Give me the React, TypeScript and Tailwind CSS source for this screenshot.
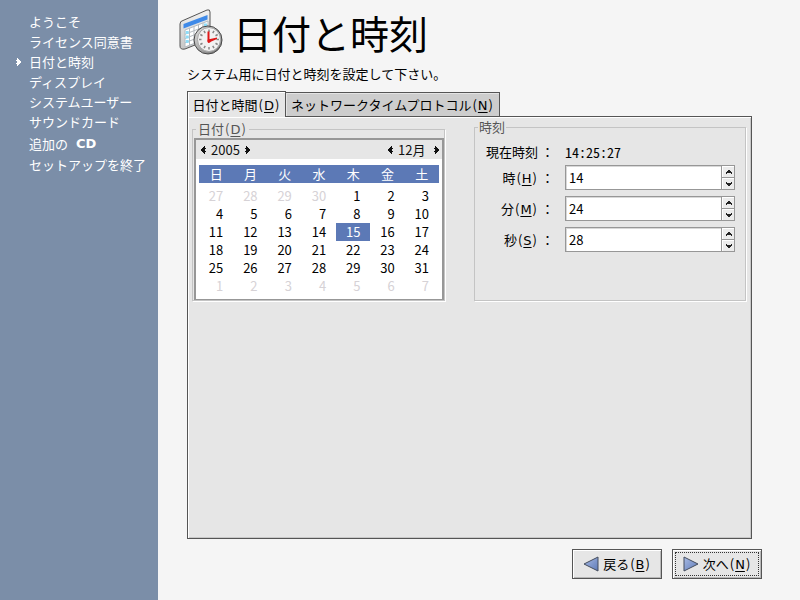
import React, { useState } from "react";

const steps = [
  { label: "ようこそ" },
  { label: "ライセンス同意書" },
  { label: "日付と時刻", current: true },
  { label: "ディスプレイ" },
  { label: "システムユーザー" },
  { label: "サウンドカード" },
  { label: "追加の", latin: "CD" },
  { label: "セットアップを終了" },
];

const weekdays = ["日", "月", "火", "水", "木", "金", "土"];

const weeks = [
  [27, 28, 29, 30, 1, 2, 3],
  [4, 5, 6, 7, 8, 9, 10],
  [11, 12, 13, 14, 15, 16, 17],
  [18, 19, 20, 21, 22, 23, 24],
  [25, 26, 27, 28, 29, 30, 31],
  [1, 2, 3, 4, 5, 6, 7],
];

function Mnemonic({ k }: { k: string }) {
  return (
    <span className="px-px">
      (<span className="mx-px font-['DejaVu_Sans',sans-serif] leading-none underline underline-offset-2">{k}</span>)
    </span>
  );
}

function Arrow({ dir }: { dir: "left" | "right" }) {
  return (
    <svg width="5" height="8" viewBox="0 0 5 8" fill="currentColor" aria-hidden="true">
      {dir === "left" ? (
        <path d="M3 0h1v2h1v1H4v2h1v1H4v2H3V7H2V6H1V5H0V3h1V2h1V1h1z" />
      ) : (
        <path d="M1 0h1v1h1v1h1v1h1v2H4v1H3v1H2v1H1V6H0V5h1V3H0V2h1z" />
      )}
    </svg>
  );
}

function SpinArrow({ up }: { up?: boolean }) {
  return (
    <svg width="6" height="4" viewBox="0 0 6 4" fill="#222" aria-hidden="true">
      {up ? <path d="M2 0h2v1h1v1h1v2H5V3H1v1H0V2h1V1h1z" /> : <path d="M0 0h1v1h4V0h1v2H5v1H4v1H2V3H1V2H0z" />}
    </svg>
  );
}

function ClockCalendarIcon() {
  const ticks = Array.from({ length: 12 }, (_, i) => i * 30);
  return (
    <svg width="44" height="48" viewBox="0 0 44 48" aria-hidden="true">
      <defs>
        <linearGradient id="paper" x1="0" y1="0" x2="0" y2="1">
          <stop offset="0" stopColor="#f2f2f2" />
          <stop offset="1" stopColor="#c6c6c6" />
        </linearGradient>
        <linearGradient id="rim" x1="0" y1="0" x2="1" y2="1">
          <stop offset="0" stopColor="#e6e6e6" />
          <stop offset="1" stopColor="#6d6d6d" />
        </linearGradient>
      </defs>
      <path d="M4 12.500 28 2q3-1 3 2v27L6 41q-5 1-5-3V16q0-3 3-3.500z" fill="url(#paper)" stroke="#555" />
      <path d="M4.500 16 28.500 7v4.500L4.500 20.500z" fill="#3f8ae8" />
      <path d="M6 22 29 13v17L6 39z" fill="#fff" />
      <path
        d="M6 22 29 13M6 26.250l23-9M6 30.500l23-9M6 34.750l23-9M6 39l23-9M6 22v17M10.500 20v17M15 18.500v17M19.500 16.500v17M24 15v17M29 13v17"
        stroke="#b4bac0"
        fill="none"
      />
      <path d="M8.200 23v3M8.200 27.500v3M8.200 32v3M26.500 15.500v3M26.500 19.500v2" stroke="#8edcf8" strokeWidth="3" />
      <circle cx="29" cy="32" r="14" fill="url(#rim)" stroke="#484848" />
      <ellipse cx="30" cy="31.500" rx="11.500" ry="12" fill="#f2f2f2" stroke="#a5a5a5" />
      {ticks.map((a) => (
        <path key={a} d="M30 21.500v2.500" stroke="#888" strokeWidth="1.500" transform={`rotate(${a} 30 31.500)`} />
      ))}
      <path d="M29.500 23.500v9" stroke="#e01818" strokeWidth="2" />
      <path d="M29 35 38 31v-1.500l-9 2z" fill="#e01818" />
      <circle cx="30" cy="33" r="1.800" fill="#e01818" />
    </svg>
  );
}

function Triangle({ dir }: { dir: "left" | "right" }) {
  return (
    <svg width="16" height="16" viewBox="0 0 16 16" aria-hidden="true">
      <defs>
        <linearGradient id={"tri-" + dir} x1="0" y1="0" x2="1" y2="1">
          <stop offset="0" stopColor="#a9bbe4" />
          <stop offset="1" stopColor="#5f7bb8" />
        </linearGradient>
      </defs>
      <path
        d={dir === "left" ? "M15 1v14L1 8z" : "M1 1v14l14-7z"}
        fill={"url(#tri-" + dir + ")"}
        stroke="#454d5c"
        strokeLinejoin="round"
      />
    </svg>
  );
}

function Spin({ id, start, max }: { id: string; start: number; max: number }) {
  const [value, setValue] = useState(String(start));
  const step = (d: number) => setValue(String((Number(value) + d + max) % max));
  const btn = "flex flex-1 items-center justify-center bg-[#ececec] border-t border-l border-white";
  return (
    <div className="flex h-[25px] border border-[#979797] bg-white">
      <input
        id={id}
        inputMode="numeric"
        value={value}
        onChange={(e) => setValue(e.target.value)}
        className="w-0 flex-1 border-t border-l border-[#d8d8d8] bg-white px-[2px] outline-none"
      />
      <div className="flex w-[13px] flex-col border-l border-[#979797]">
        <button type="button" aria-label="増やす" onClick={() => step(1)} className={btn}>
          <SpinArrow up />
        </button>
        <div className="h-px bg-[#979797]" />
        <button type="button" aria-label="減らす" onClick={() => step(-1)} className={btn}>
          <SpinArrow />
        </button>
      </div>
    </div>
  );
}

function Calendar() {
  const [selected, setSelected] = useState(15);
  return (
    <div className="border-2 border-b border-[#979797] bg-white">
      <div className="flex h-[19px] items-center justify-between bg-[#e6e6e6] pr-[3px] pl-[5px] text-[#111]">
        <div className="flex items-center gap-[5px]">
          <button type="button" aria-label="前の年"><Arrow dir="left" /></button>
          <span className="w-[29px] whitespace-nowrap">2005</span>
          <button type="button" aria-label="次の年"><Arrow dir="right" /></button>
        </div>
        <div className="flex items-center gap-[5px]">
          <button type="button" aria-label="前の月"><Arrow dir="left" /></button>
          <span className="w-[31px] whitespace-nowrap">12月</span>
          <button type="button" aria-label="次の月"><Arrow dir="right" /></button>
        </div>
      </div>
      <div className="px-[3px] pt-[6px] pb-1">
        <table className="w-full table-fixed border-collapse">
          <thead>
            <tr className="h-[18px] bg-[#5c79b6] text-white">
              {weekdays.map((d) => (
                <th key={d} scope="col" className="p-0 font-normal leading-[18px]">{d}</th>
              ))}
            </tr>
          </thead>
          <tbody className="before:block before:h-1">
            {weeks.map((week, w) => (
              <tr key={w}>
                {week.map((d) => {
                  const outside = (w === 0 && d > 20) || w === 5;
                  const on = !outside && d === selected;
                  return (
                    <td key={d} className="h-[18px] p-0">
                      <button
                        type="button"
                        onClick={() => !outside && setSelected(d)}
                        className={
                          "block h-[18px] w-full pr-[10px] text-right leading-[18px] " +
                          (on ? "bg-[#5c79b6] text-white" : outside ? "text-[#d6d2d6]" : "text-black")
                        }
                      >
                        {d}
                      </button>
                    </td>
                  );
                })}
              </tr>
            ))}
          </tbody>
        </table>
      </div>
    </div>
  );
}

const group = "min-w-0 border border-[#c4c4c4] shadow-[1px_1px_0_#fff]";

export default function App() {
  return (
    <div className="flex min-h-screen bg-[#f5f5f5] font-['Noto_Sans_CJK_JP',sans-serif] text-[13px] leading-[18px] text-black">
      <nav aria-label="セットアップ" className="w-[158px] shrink-0 bg-[#7b8ea8] pt-3 text-white">
        <ol className="flex flex-col">
          {steps.map((s) => (
            <li
              key={s.label}
              aria-current={s.current ? "step" : undefined}
              className={"flex items-center whitespace-nowrap " + (s.latin ? "h-[23px]" : "h-5")}
            >
              <span className="flex w-[29px] pl-4">{s.current && <Arrow dir="right" />}</span>
              <span>{s.label}</span>
              {s.latin && <b className="ml-2 font-['DejaVu_Sans',sans-serif]">{s.latin}</b>}
            </li>
          ))}
        </ol>
      </nav>

      <main className="flex min-w-0 flex-1 flex-col pr-[38px] pb-[21px] pl-[29px]">
        <header>
          <div className="-ml-2 flex h-16 items-center gap-[10px]">
            <ClockCalendarIcon />
            <h1 className="text-[39px] leading-[60px]">日付と時刻</h1>
          </div>
          <p className="h-[27px] leading-5">システム用に日付と時刻を設定して下さい。</p>
        </header>

        <div className="mr-[10px] flex flex-1 flex-col">
          <div role="tablist" className="z-10 -mb-px flex items-end">
            <button
              type="button"
              role="tab"
              aria-selected="true"
              className="h-[26px] w-[99px] border border-b-0 border-[#555] bg-[#e6e6e6] text-center whitespace-nowrap shadow-[inset_1px_1px_0_#fff]"
            >
              日付と時間<Mnemonic k="D" />
            </button>
            <button
              type="button"
              role="tab"
              aria-selected="false"
              className="-ml-px h-[25px] w-[215px] border border-[#555] bg-[#cdcdcd] text-center whitespace-nowrap shadow-[inset_1px_1px_0_#e4e4e4]"
            >
              ネットワークタイムプロトコル<Mnemonic k="N" />
            </button>
          </div>

          <div
            role="tabpanel"
            className="flex flex-1 items-start gap-[29px] border border-[#555] bg-[#e6e6e6] pt-px pr-[5px] pl-1 shadow-[inset_1px_1px_0_#fff,inset_-1px_-1px_0_#c8c8c8]"
          >
            <fieldset className={group + " mt-[2px] w-[253px] shrink-0 pl-px"}>
              <legend className="ml-[2px] bg-[#e6e6e6] px-[2px] text-[#555]">
                日付<Mnemonic k="D" />
              </legend>
              <Calendar />
            </fieldset>

            <fieldset className={group + " flex-1 pr-[10px] pb-12 pl-[11px]"}>
              <legend className="-ml-2 bg-[#e6e6e6] px-[1px] text-[#555]">時刻</legend>
              <div className="grid grid-cols-[auto_1fr] items-center gap-x-[11px] gap-y-[6px] pt-[9px]">
                <span className="text-right leading-[14px]">現在時刻 ：</span>
                <time className="font-['Noto_Sans_Mono_CJK_JP','Liberation_Mono',monospace] text-sm leading-[14px]">14:25:27</time>
                <label htmlFor="hour" className="text-right">時<Mnemonic k="H" /> ：</label>
                <Spin id="hour" start={14} max={24} />
                <label htmlFor="minute" className="text-right">分<Mnemonic k="M" /> ：</label>
                <Spin id="minute" start={24} max={60} />
                <label htmlFor="second" className="text-right">秒<Mnemonic k="S" /> ：</label>
                <Spin id="second" start={28} max={60} />
              </div>
            </fieldset>
          </div>
        </div>

        <footer className="mt-[10px] flex justify-end gap-[10px]">
          <button
            type="button"
            className="flex h-[30px] w-[90px] items-center justify-center gap-1 border border-[#555] bg-[#e6e6e6] whitespace-nowrap shadow-[inset_1px_1px_0_#fff,inset_-1px_-1px_0_#b8b8b8]"
          >
            <Triangle dir="left" />
            <span>戻る<Mnemonic k="B" /></span>
          </button>
          <button
            type="button"
            className="h-[30px] w-[90px] border border-[#555] bg-[#e6e6e6] p-[2px] whitespace-nowrap shadow-[inset_1px_1px_0_#fff,inset_-1px_-1px_0_#b8b8b8]"
          >
            <span className="flex h-full items-center justify-center gap-1 border border-dotted border-[#333]">
              <Triangle dir="right" />
              <span>次へ<Mnemonic k="N" /></span>
            </span>
          </button>
        </footer>
      </main>
    </div>
  );
}
